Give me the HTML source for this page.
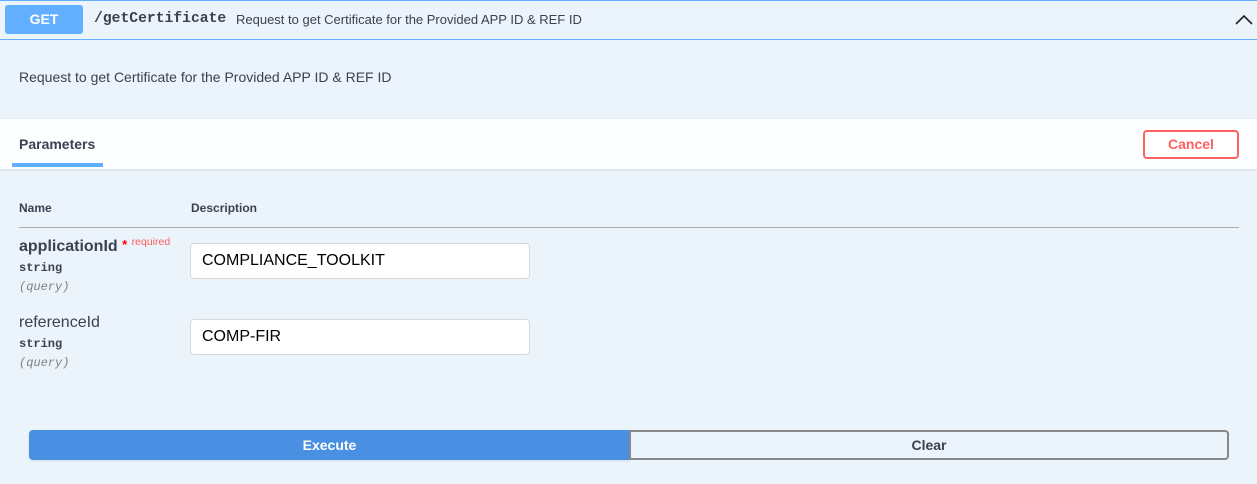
<!DOCTYPE html>
<html><head><meta charset="utf-8"><style>
*{margin:0;padding:0;box-sizing:border-box}
body{width:1257px;height:484px;background:#ebf3fb;font-family:"Liberation Sans",sans-serif;color:#3b4151;position:relative;overflow:hidden}
.a{position:absolute;white-space:nowrap}
.mono{font-family:"Liberation Mono","DejaVu Sans Mono",monospace}
</style></head><body>
<div class="a" style="left:0;top:0;width:1257px;height:1px;background:#61affe"></div>
<div class="a" style="left:0;top:39px;width:1257px;height:1px;background:#61affe"></div>
<div class="a" style="left:5px;top:5px;width:78px;height:29px;background:#61affe;border-radius:3px;color:#fff;font-weight:bold;font-size:14px;text-align:center;line-height:29px">GET</div>
<div class="a mono" style="left:94px;top:11px;font-size:14.7px;font-weight:bold;color:#3b4151">/getCertificate</div>
<div class="a" style="left:236px;top:12px;font-size:13px;color:#3b4151">Request to get Certificate for the Provided APP ID &amp; REF ID</div>
<svg class="a" style="left:1235px;top:14px" width="18" height="12" viewBox="0 0 18 12"><path d="M1 10 L9 2 L17 10" fill="none" stroke="#222" stroke-width="1.6"/></svg>
<div class="a" style="left:19px;top:69px;font-size:14px">Request to get Certificate for the Provided APP ID &amp; REF ID</div>
<div class="a" style="left:0;top:119px;width:1257px;height:50px;background:rgba(255,255,255,.85);box-shadow:0 1px 2px rgba(0,0,0,.12)"></div>
<div class="a" style="left:19px;top:136px;font-size:14px;font-weight:bold">Parameters</div>
<div class="a" style="left:12px;top:163px;width:91px;height:4px;background:#61affe"></div>
<div class="a" style="left:1143px;top:130px;width:96px;height:29px;border:2px solid #ff6060;border-radius:4px;color:#ff6060;font-weight:bold;font-size:14px;text-align:center;line-height:25px;background:#fff">Cancel</div>
<div class="a" style="left:19px;top:201px;font-size:12px;font-weight:bold">Name</div>
<div class="a" style="left:191px;top:201px;font-size:12px;font-weight:bold">Description</div>
<div class="a" style="left:19px;top:227px;width:1220px;height:1px;background:#a9acb3"></div>
<div class="a" style="left:19px;top:236px;font-size:16px;font-weight:bold">applicationId <span style="color:red;font-size:13px;vertical-align:2px">*</span> <span style="color:#ff6060;font-size:10.5px;font-weight:normal;vertical-align:6px">required</span></div>
<div class="a mono" style="left:19px;top:261px;font-size:12px;font-weight:bold">string</div>
<div class="a mono" style="left:19px;top:280px;font-size:12px;font-style:italic;color:#808080">(query)</div>
<div class="a" style="left:190px;top:243px;width:340px;height:36px;background:#fff;border:1px solid #d9d9d9;border-radius:4px;font-size:16px;color:#000;padding-left:11px;line-height:34px">COMPLIANCE_TOOLKIT</div>
<div class="a" style="left:19px;top:314px;font-size:16px">referenceId</div>
<div class="a mono" style="left:19px;top:337px;font-size:12px;font-weight:bold">string</div>
<div class="a mono" style="left:19px;top:356px;font-size:12px;font-style:italic;color:#808080">(query)</div>
<div class="a" style="left:190px;top:319px;width:340px;height:36px;background:#fff;border:1px solid #d9d9d9;border-radius:4px;font-size:16px;color:#000;padding-left:11px;line-height:34px">COMP-FIR</div>
<div class="a" style="left:29px;top:430px;width:601px;height:30px;background:#4990e2;border-radius:4px 0 0 4px;color:#fff;font-weight:bold;font-size:14px;text-align:center;line-height:30px;box-shadow:0 1px 2px rgba(0,0,0,.1)">Execute</div>
<div class="a" style="left:629px;top:430px;width:600px;height:30px;border:2px solid #888;border-radius:0 4px 4px 0;font-weight:bold;font-size:14px;text-align:center;line-height:26px">Clear</div>
</body></html>
